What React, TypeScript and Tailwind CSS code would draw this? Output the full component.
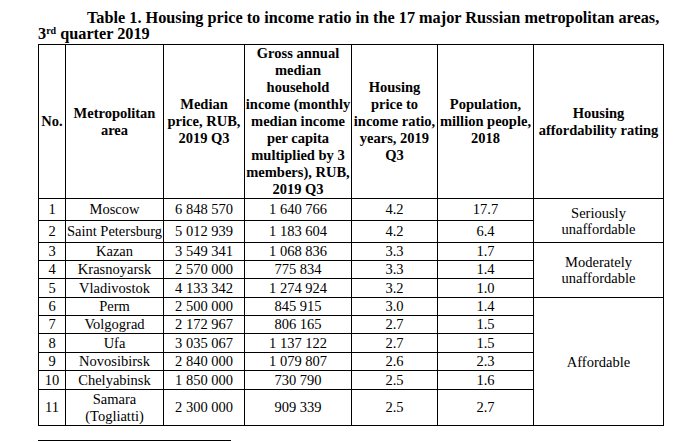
const rows = [
  { n: "1", city: "Moscow", price: "6 848 570", income: "1 640 766", ratio: "4.2", pop: "17.7", h: "h-[22px]" },
  { n: "2", city: "Saint Petersburg", price: "5 012 939", income: "1 183 604", ratio: "4.2", pop: "6.4", h: "h-[22px]" },
  { n: "3", city: "Kazan", price: "3 549 341", income: "1 068 836", ratio: "3.3", pop: "1.7", h: "h-[18px]" },
  { n: "4", city: "Krasnoyarsk", price: "2 570 000", income: "775 834", ratio: "3.3", pop: "1.4", h: "h-[18px]" },
  { n: "5", city: "Vladivostok", price: "4 133 342", income: "1 274 924", ratio: "3.2", pop: "1.0", h: "h-[19px]" },
  { n: "6", city: "Perm", price: "2 500 000", income: "845 915", ratio: "3.0", pop: "1.4", h: "h-[18px]" },
  { n: "7", city: "Volgograd", price: "2 172 967", income: "806 165", ratio: "2.7", pop: "1.5", h: "h-[18px]" },
  { n: "8", city: "Ufa", price: "3 035 067", income: "1 137 122", ratio: "2.7", pop: "1.5", h: "h-[19px]" },
  { n: "9", city: "Novosibirsk", price: "2 840 000", income: "1 079 807", ratio: "2.6", pop: "2.3", h: "h-[18px]" },
  { n: "10", city: "Chelyabinsk", price: "1 850 000", income: "730 790", ratio: "2.5", pop: "1.6", h: "h-[19px]" },
]

const ratings: Record<string, { text: string[]; span: number }> = {
  "1": { text: ["Seriously", "unaffordable"], span: 2 },
  "3": { text: ["Moderately", "unaffordable"], span: 3 },
  "6": { text: ["Affordable"], span: 6 },
}

const cell =
  "border border-black p-0 text-center align-middle whitespace-nowrap font-['Liberation_Serif',serif] text-[14.5px]"

export default function App() {
  return (
    <div className="min-h-[442px] w-[677px] bg-white text-black font-['Liberation_Serif',serif]">
      {/* TITLE */}
      <div className="pl-[38px] pt-[10px] text-[16.25px] leading-[16px] font-bold whitespace-nowrap">
        <div className="pl-[49px]">Table 1. Housing price to income ratio in the 17 major Russian metropolitan areas,</div>
        <div>
          3<sup className="text-[10px] leading-none">rd</sup> quarter 2019
        </div>
      </div>

      {/* TABLE */}
      <table className="ml-[38px] mt-[2px] w-[625px] table-fixed border-collapse font-['Liberation_Serif',serif] text-[14.5px] text-black">
        <colgroup>
          <col className="w-[27px]" />
          <col className="w-[98px]" />
          <col className="w-[81px]" />
          <col className="w-[107px]" />
          <col className="w-[86px]" />
          <col className="w-[96px]" />
          <col className="w-[130px]" />
        </colgroup>
        <thead>
          <tr className="h-[154px]">
            {[
              ["No."],
              ["Metropolitan", "area"],
              ["Median", "price, RUB,", "2019 Q3"],
              ["Gross annual", "median", "household", "income (monthly", "median income", "per capita", "multiplied by 3", "members), RUB,", "2019 Q3"],
              ["Housing", "price to", "income ratio,", "years, 2019", "Q3"],
              ["Population,", "million people,", "2018"],
              ["Housing", "affordability rating"],
            ].map((lines, i) => (
              <th key={i} className={cell + " font-bold leading-[17px]"}>
                {lines.map((l) => (
                  <div key={l}>{l}</div>
                ))}
              </th>
            ))}
          </tr>
        </thead>
        <tbody>
          {rows.map((r) => (
            <tr key={r.n} className={r.h}>
              <td className={cell + " leading-[17px]"}>{r.n}</td>
              <td className={cell + " leading-[17px]"}>{r.city}</td>
              <td className={cell + " leading-[17px]"}>{r.price}</td>
              <td className={cell + " leading-[17px]"}>{r.income}</td>
              <td className={cell + " leading-[17px]"}>{r.ratio}</td>
              <td className={cell + " leading-[17px]"}>{r.pop}</td>
              {ratings[r.n] && (
                <td rowSpan={ratings[r.n].span} className={cell + " leading-[16px]"}>
                  {ratings[r.n].text.map((t) => (
                    <div key={t}>{t}</div>
                  ))}
                </td>
              )}
            </tr>
          ))}
          <tr className="h-[36px]">
            <td className={cell + " leading-[17px]"}>11</td>
            <td className={cell + " leading-[17px]"}>
              <div>Samara</div>
              <div>(Togliatti)</div>
            </td>
            <td className={cell + " leading-[17px]"}>2 300 000</td>
            <td className={cell + " leading-[17px]"}>909 339</td>
            <td className={cell + " leading-[17px]"}>2.5</td>
            <td className={cell + " leading-[17px]"}>2.7</td>
          </tr>
        </tbody>
      </table>

      {/* FOOTNOTE RULE */}
      <div className="ml-[38px] mt-[14px] w-[193px] border-t border-black" />
    </div>
  )
}
